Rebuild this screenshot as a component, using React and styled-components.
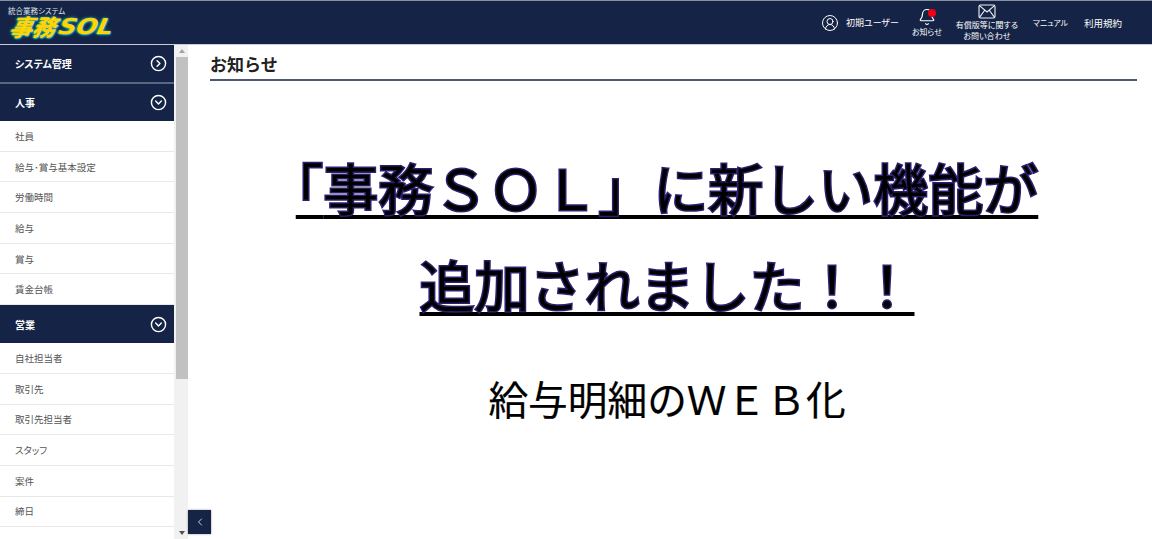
import styled, { createGlobalStyle } from "styled-components";
import { Bell, ChevronLeft, CircleChevronDown, CircleChevronRight, CircleUserRound } from "lucide-react";

const JP = `"Noto Sans CJK JP", "Noto Sans", sans-serif`;

const GlobalStyle = createGlobalStyle`
  html, body {
    margin: 0;
    height: 100%;
    overflow: hidden;
    background: #fff;
    font-family: ${JP};
  }
  #root {
    height: 100%;
  }
`;

const Page = styled.div`
  display: flex;
  flex-direction: column;
  height: 539px;
`;

const Header = styled.header`
  display: flex;
  align-items: center;
  justify-content: space-between;
  box-sizing: border-box;
  height: 45px;
  flex: none;
  padding: 0 30px 0 8px;
  background: #152446;
  border-top: 1px solid #8a90a0;
  border-bottom: 1px solid #c9ccd4;
  color: #fff;
  font-feature-settings: "palt";
`;

const Logo = styled.div`
  display: flex;
  flex-direction: column;
  margin-top: -1px;
`;

const LogoCaption = styled.div`
  font-size: 7.5px;
  line-height: 9px;
  color: #dfe2e8;
`;

const LogoMark = styled.div`
  display: flex;
  align-items: center;
  margin: -1px 0 0 2px;
  font-size: 23px;
  line-height: 25px;
  font-weight: 900;
  font-style: italic;
  color: #ffd400;
  text-shadow: 0 0 3px #17a5c0, 1px 1px 1px #17a5c0, -1px 0 1px #0d7a96;
  transform: skewX(-12deg);
`;

const LogoLatin = styled.span`
  display: inline-block;
  margin-left: 3px;
  font-family: "DejaVu Sans", sans-serif;
  font-weight: 700;
  font-size: 22px;
  letter-spacing: -0.5px;
  transform: scaleX(1.14);
  transform-origin: left center;
`;

const HeaderNav = styled.nav`
  display: flex;
  align-items: center;
  font-size: 9px;
`;

const UserItem = styled.div`
  display: flex;
  align-items: center;
  gap: 7px;
  margin-right: 14px;
`;

const IconItem = styled.div`
  position: relative;
  display: flex;
  flex-direction: column;
  align-items: center;
  width: ${(p) => p.$width}px;
  margin-right: ${(p) => p.$gap}px;
  font-size: 8px;
  line-height: 11px;
  text-align: center;
  white-space: nowrap;
`;

const RedDot = styled.span`
  position: absolute;
  top: 1px;
  left: 15px;
  width: 8px;
  height: 8px;
  border-radius: 50%;
  background: #f00014;
`;

const TextLink = styled.span`
  margin-left: ${(p) => p.$gap}px;
  font-size: ${(p) => p.$size}px;
  white-space: nowrap;
`;

const Body = styled.div`
  display: flex;
  flex: 1;
  min-height: 0;
`;

const Sidebar = styled.aside`
  width: 174px;
  flex: none;
  overflow: hidden;
  font-feature-settings: "palt";
`;

const GroupHead = styled.div`
  display: flex;
  align-items: center;
  justify-content: space-between;
  box-sizing: border-box;
  height: ${(p) => p.$height}px;
  padding: 0 7px 0 15px;
  background: #152446;
  border-bottom: ${(p) => (p.$divider ? "2px solid #5a6580" : "none")};
  color: #fff;
  font-size: 10px;
  font-weight: 700;
`;

const MenuItem = styled.div`
  display: flex;
  align-items: center;
  box-sizing: border-box;
  height: 30.7px;
  padding-left: 15px;
  border-bottom: 1px solid #e8e8e8;
  color: #555;
  font-size: 9.5px;
`;

const Scrollbar = styled.div`
  display: flex;
  flex-direction: column;
  align-items: center;
  width: 14px;
  flex: none;
  padding-left: 2px;
  background: #f1f1f1;
  box-sizing: border-box;
`;

const ScrollArrow = styled.div`
  display: flex;
  align-items: center;
  justify-content: center;
  height: 12px;
  width: 100%;
  flex: none;
  &::before {
    content: "";
    border-left: 3.5px solid transparent;
    border-right: 3.5px solid transparent;
    ${(p) => (p.$down ? "border-top: 4px solid #505050;" : "border-bottom: 4px solid #a3a3a3;")}
  }
`;

const ScrollThumb = styled.div`
  width: 100%;
  height: 322px;
  flex: none;
  background: #c1c1c1;
`;

const ScrollTrack = styled.div`
  flex: 1;
`;

const Main = styled.main`
  position: relative;
  flex: 1;
  padding: 0 15px 0 22px;
`;

const Title = styled.h1`
  margin: 0;
  height: 36px;
  box-sizing: border-box;
  padding-top: 6px;
  border-bottom: 2px solid #4d5877;
  color: #222;
  font-size: 17px;
  line-height: 26px;
  font-weight: 700;
`;

const Notice = styled.div`
  display: flex;
  flex-direction: column;
  align-items: center;
  padding: 74px 13px 0 0;
`;

const Headline = styled.div`
  height: 97px;
  font-family: "Liberation Sans", ${JP};
  font-size: 55px;
  line-height: 72px;
  color: #000;
  -webkit-text-stroke: 3px #2b1f6e;
  paint-order: stroke fill;
  white-space: nowrap;
  text-decoration: underline 4px #000;
  text-underline-offset: 5px;
`;

const OpenBracket = styled.span`
  font-feature-settings: "halt";
`;

const SubLine = styled.div`
  margin-top: 23px;
  font-family: "Liberation Sans", ${JP};
  font-size: 39.7px;
  line-height: 58px;
  color: #000;
  -webkit-text-stroke: 0.2px #000;
  white-space: nowrap;
`;

const CollapseButton = styled.button`
  position: absolute;
  left: 0;
  bottom: 5px;
  display: flex;
  align-items: center;
  justify-content: center;
  width: 23px;
  height: 24px;
  padding: 0;
  border: none;
  background: #152446;
  box-shadow: 0 0 2px rgba(0, 0, 0, 0.4);
  color: #c9ccd4;
`;

const HR_ITEMS = ["社員", "給与･賞与基本設定", "労働時間", "給与", "賞与", "賃金台帳"];
const SALES_ITEMS = ["自社担当者", "取引先", "取引先担当者", "スタッフ", "案件", "締日"];

const MailIcon = () => (
  <svg width="18" height="15" viewBox="0 0 18 15" fill="none" stroke="#eef0f4" strokeWidth="1.1">
    <rect x="1" y="1" width="16" height="13" rx="1.5" />
    <path d="M1.5 1.7 9 8l7.5-6.3M1.5 13.4 6.7 6.2M16.5 13.4l-5.2-7.2" />
  </svg>
);

const App = () => (
  <Page>
    <GlobalStyle />
    <Header>
      <Logo>
        <LogoCaption>統合業務システム</LogoCaption>
        <LogoMark>
          事務<LogoLatin>SOL</LogoLatin>
        </LogoMark>
      </Logo>
      <HeaderNav>
        <UserItem>
          <CircleUserRound size={18} strokeWidth={1.3} />
          初期ユーザー
        </UserItem>
        <IconItem $width={28} $gap={15}>
          <Bell size={18} strokeWidth={1.6} />
          <RedDot />
          お知らせ
        </IconItem>
        <IconItem $width={62}>
          <MailIcon />
          有償版等に関する
          <br />
          お問い合わせ
        </IconItem>
        <TextLink $gap={15} $size={7.8}>
          マニュアル
        </TextLink>
        <TextLink $gap={16} $size={9.5}>
          利用規約
        </TextLink>
      </HeaderNav>
    </Header>
    <Body>
      <Sidebar>
        <GroupHead $height={39} $divider>
          システム管理
          <CircleChevronRight size={17} strokeWidth={2} />
        </GroupHead>
        <GroupHead $height={37}>
          人事
          <CircleChevronDown size={17} strokeWidth={2} />
        </GroupHead>
        {HR_ITEMS.map((item) => (
          <MenuItem key={item}>{item}</MenuItem>
        ))}
        <GroupHead $height={38}>
          営業
          <CircleChevronDown size={17} strokeWidth={2} />
        </GroupHead>
        {SALES_ITEMS.map((item) => (
          <MenuItem key={item}>{item}</MenuItem>
        ))}
      </Sidebar>
      <Scrollbar>
        <ScrollArrow />
        <ScrollThumb />
        <ScrollTrack />
        <ScrollArrow $down />
      </Scrollbar>
      <Main>
        <Title>お知らせ</Title>
        <Notice>
          <Headline>
            <OpenBracket>「</OpenBracket>事務ＳＯＬ」に新しい機能が
          </Headline>
          <Headline>追加されました！！</Headline>
          <SubLine>給与明細のＷＥＢ化</SubLine>
        </Notice>
        <CollapseButton>
          <ChevronLeft size={12} strokeWidth={2} />
        </CollapseButton>
      </Main>
    </Body>
  </Page>
);

export default App;
